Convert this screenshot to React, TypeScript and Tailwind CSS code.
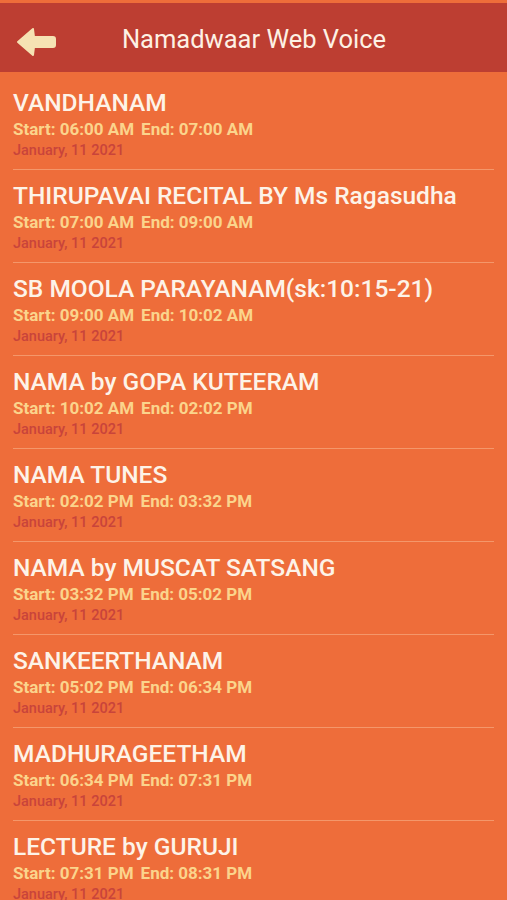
const items = [
  ["VANDHANAM", "06:00 AM", "07:00 AM"],
  ["THIRUPAVAI RECITAL BY Ms Ragasudha", "07:00 AM", "09:00 AM"],
  ["SB MOOLA PARAYANAM(sk:10:15-21)", "09:00 AM", "10:02 AM"],
  ["NAMA by GOPA KUTEERAM", "10:02 AM", "02:02 PM"],
  ["NAMA TUNES", "02:02 PM", "03:32 PM"],
  ["NAMA by MUSCAT SATSANG", "03:32 PM", "05:02 PM"],
  ["SANKEERTHANAM", "05:02 PM", "06:34 PM"],
  ["MADHURAGEETHAM", "06:34 PM", "07:31 PM"],
  ["LECTURE by GURUJI", "07:31 PM", "08:31 PM"],
  ["NAMA", "08:31 PM", "09:31 PM"],
]

function BackArrow() {
  return (
    <svg width="40" height="30" viewBox="0 0 40 30">
      <path
        d="M2 15 L17 2 L18 10 L37 10 Q39 10 39 12 L39 18 Q39 20 37 20 L18 20 L17 28 Z"
        fill="#f6e2b3"
        stroke="#f6e2b3"
        strokeWidth="2"
        strokeLinejoin="round"
      />
    </svg>
  )
}

export default function App() {
  return (
    <div className="w-[507px] h-[900px] overflow-hidden bg-[#ee6d3a] font-['Roboto',sans-serif]">
      <div className="h-[3px] bg-[#ee6d3a]" />
      <header className="h-[69px] bg-[#bd3e32] flex items-center relative pt-[4px]">
        <div className="absolute left-[16px] top-[24px]">
          <BackArrow />
        </div>
        <h1 className="w-full text-center text-[25.5px] text-[#fdf1e4] pl-[1px]">Namadwaar Web Voice</h1>
      </header>
      <div className="pt-[5px]">
        {items.map(([title, start, end], i) => (
          <div key={i}>
            <div className="px-[13px] pt-[12px] pb-[9px]">
              <div className="text-[24.5px] leading-[28px] font-medium text-[#fdf3e8] whitespace-nowrap">{title}</div>
              <div className="mt-[2px] text-[17px] leading-[20px] font-bold text-[#fbd48c] whitespace-nowrap">
                Start: {start}
                <span className="ml-[7px]">End: {end}</span>
              </div>
              <div className="mt-[3px] text-[14.5px] leading-[18px] font-medium text-[#c9443a]">January, 11 2021</div>
            </div>
            <div className="mx-[13px] border-t border-[#f4976a]" />
          </div>
        ))}
      </div>
    </div>
  )
}
